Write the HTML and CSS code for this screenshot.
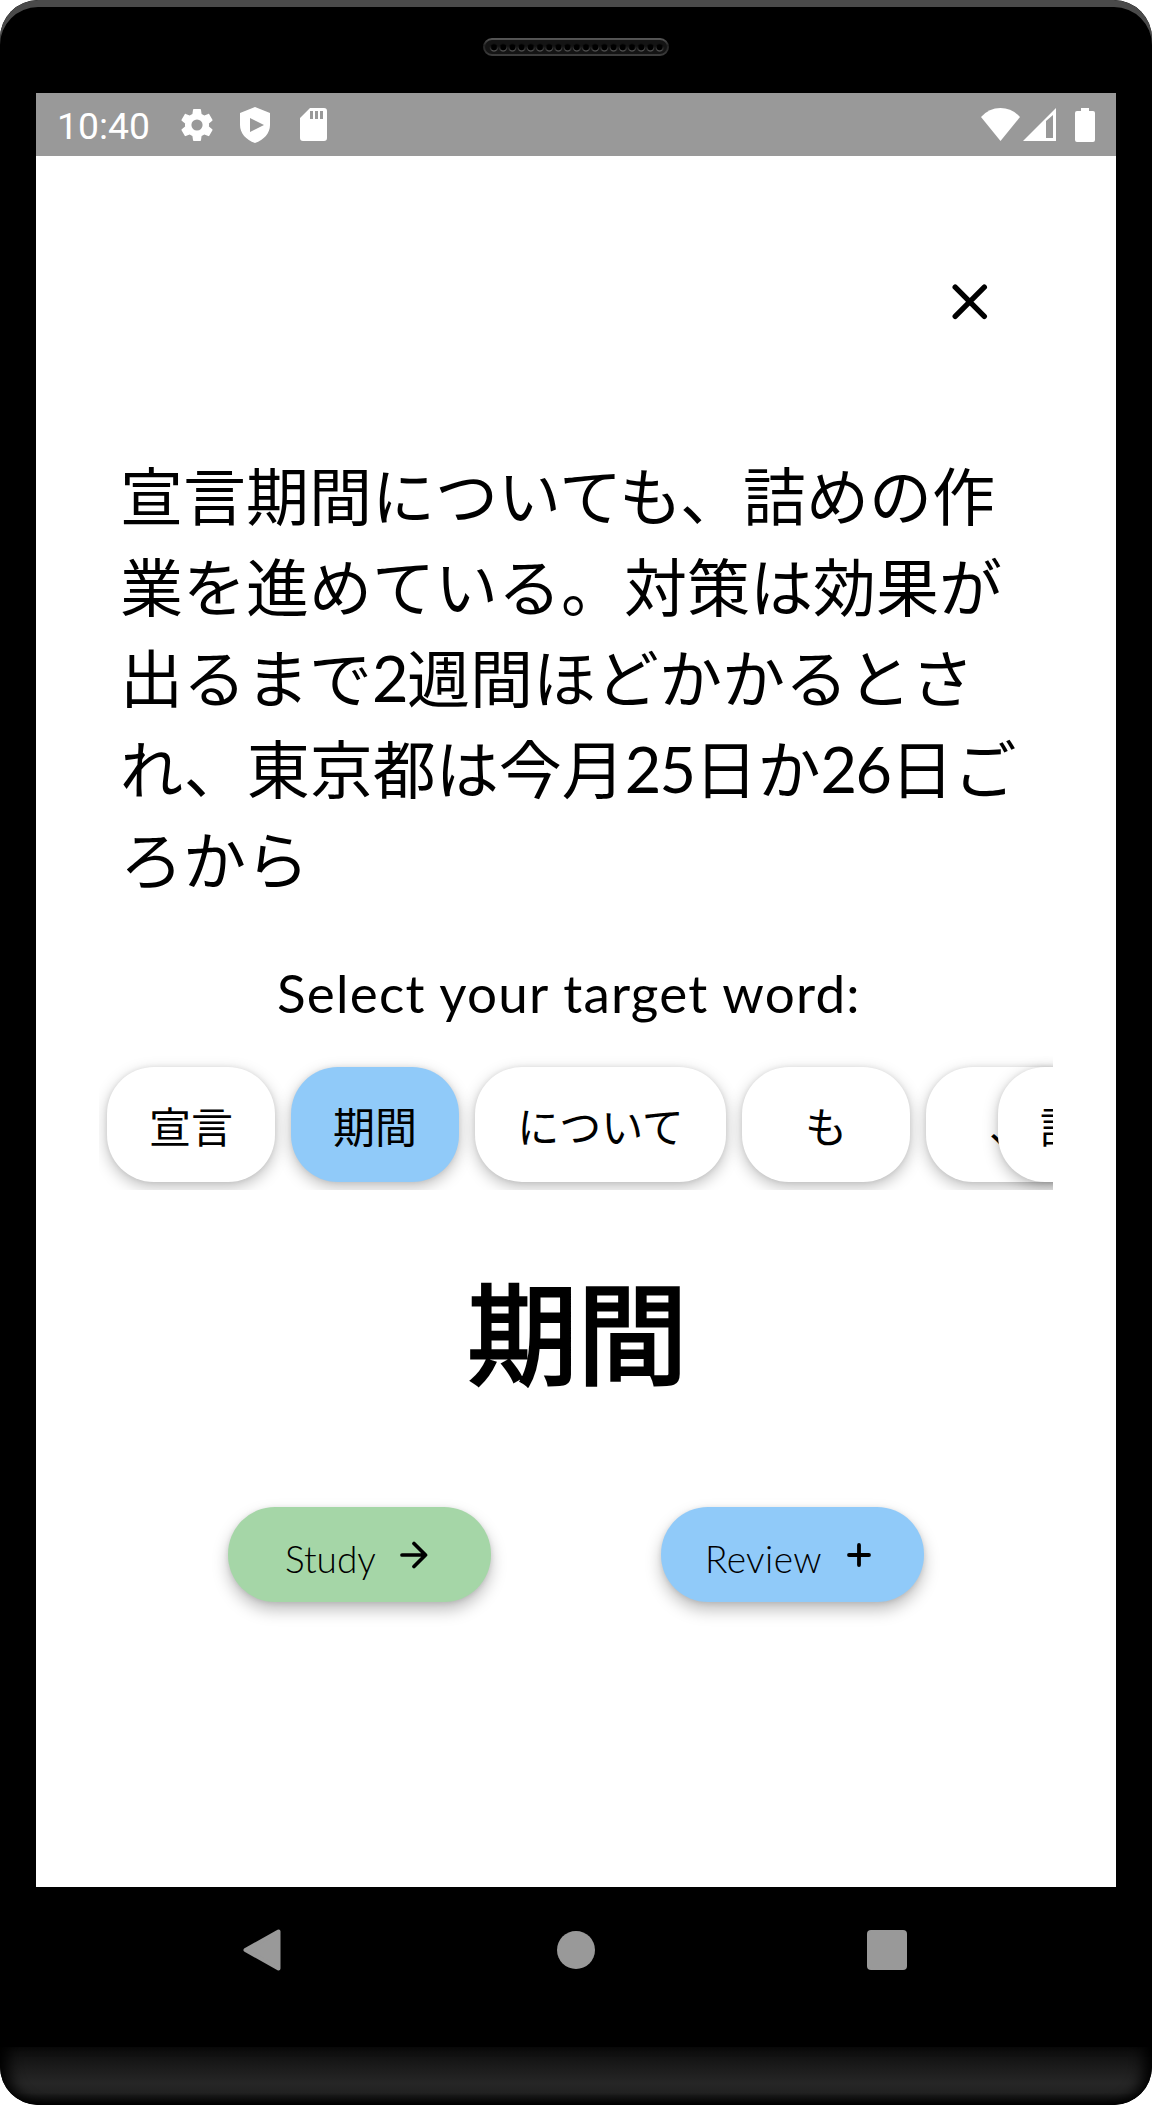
FILE: index.html
```html
<!DOCTYPE html>
<html lang="ja">
<head>
<meta charset="utf-8">
<title>Select target word</title>
<link rel="stylesheet" href="styles.css">
</head>
<body>
<div class="phone">
  <div class="top-bezel">
    <svg class="speaker" viewBox="0 0 186 18">
      <defs>
        <linearGradient id="rim" x1="0" y1="0" x2="0" y2="1"><stop offset="0" stop-color="#555"/><stop offset=".4" stop-color="#222"/><stop offset="1" stop-color="#3c3c3c"/></linearGradient>
        <linearGradient id="hole" x1="0" y1="0" x2="0" y2="1"><stop offset=".3" stop-color="#111"/><stop offset="1" stop-color="#666"/></linearGradient>
        <pattern id="holes" x="6.4" y="0" width="9.2" height="18" patternUnits="userSpaceOnUse"><circle cx="4.6" cy="9.3" r="3.6" fill="#000" stroke="url(#hole)" stroke-width="1"/></pattern>
      </defs>
      <rect x="1" y="1" width="184" height="16" rx="8" fill="#141414" stroke="url(#rim)" stroke-width="2"/>
      <rect x="6.4" y="0" width="174.8" height="18" fill="url(#holes)"/>
    </svg>
  </div>
  <main class="screen">
    <header class="status">
      <span class="time">10:40</span>
      <svg class="i-gear" viewBox="2 2 20 20"><path fill="#fff" d="M19.43 12.98c.04-.32.07-.64.07-.98s-.03-.66-.07-.98l2.11-1.65c.19-.15.24-.42.12-.64l-2-3.46c-.12-.22-.39-.3-.61-.22l-2.49 1c-.52-.4-1.08-.73-1.69-.98l-.38-2.65C14.46 2.18 14.25 2 14 2h-4c-.25 0-.46.18-.49.42l-.38 2.65c-.61.25-1.17.59-1.69.98l-2.49-1c-.23-.09-.49 0-.61.22l-2 3.46c-.13.22-.07.49.12.64l2.11 1.65c-.04.32-.07.65-.07.98s.03.66.07.98l-2.11 1.65c-.19.15-.24.42-.12.64l2 3.46c.12.22.39.3.61.22l2.49-1c.52.4 1.08.73 1.69.98l.38 2.65c.03.24.24.42.49.42h4c.25 0 .46-.18.49-.42l.38-2.65c.61-.25 1.17-.59 1.69-.98l2.49 1c.23.09.49 0 .61-.22l2-3.46c.12-.22.07-.49-.12-.64l-2.11-1.65zM12 15.5a3.5 3.5 0 1 1 0-7 3.5 3.5 0 0 1 0 7z"/></svg>
      <svg class="i-shield" viewBox="0 0 30 36"><path fill="#fff" fill-rule="evenodd" d="M15 0 30 6v12c0 8-6 15-15 18C6 33 0 26 0 18V6zM10 11v14l14-7z"/></svg>
      <svg class="i-sd" viewBox="0 0 27 33"><path fill="#fff" fill-rule="evenodd" d="M10 0h14q3 0 3 3v27q0 3-3 3H3q-3 0-3-3V10zM10 3v8h3V3zM15 3v8h3V3zM20 3v8h3V3z"/></svg>
      <span class="spacer"></span>
      <svg class="i-wifi" viewBox="0 0 39 33"><path fill="#fff" d="M0 9Q8 0 19.500 0T39 9L19.500 33z"/></svg>
      <svg class="i-signal" viewBox="0 0 33 33"><path fill="#fff" fill-rule="evenodd" d="M33 0v33H0zM23 13v17h7V7z"/></svg>
      <svg class="i-battery" viewBox="0 0 20 34"><path fill="#fff" d="M6 0h8v3h4q2 0 2 2v27q0 2-2 2H2q-2 0-2-2V5q0-2 2-2h4z"/></svg>
    </header>
    <div class="close-row">
      <svg class="close" viewBox="0 0 36 36"><path d="M3.200 3.200 32.300 32.300M32.300 3.200 3.200 32.300" fill="none" stroke="#000" stroke-width="5.400" stroke-linecap="round"/></svg>
    </div>
    <p class="sentence">宣言期間についても、詰めの作<br>業を進めている。対策は効果が<br>出るまで<span class="num">2</span>週間ほどかかるとさ<br>れ、東京都は今月<span class="num">25</span>日か<span class="num">26</span>日ご<br>ろから</p>
    <h2 class="prompt">Select your target word:</h2>
    <div class="chips">
      <button class="chip">宣言</button>
      <button class="chip selected">期間</button>
      <button class="chip wide">について</button>
      <button class="chip">も</button>
      <button class="chip">、</button>
      <button class="chip overlap">詰め</button>
    </div>
    <div class="target">期間</div>
    <div class="actions">
      <button class="action study"><span class="study-label">Study</span><svg class="arrow" viewBox="0 0 28 28"><path d="M2 14H25M14 2.500 25.500 14 14 25.500" fill="none" stroke="#000" stroke-width="3.700" stroke-linecap="round" stroke-linejoin="round"/></svg></button>
      <button class="action review"><span class="review-label">Review</span><svg class="plus" viewBox="0 0 24 24"><path d="M2 12H22M12 2V22" fill="none" stroke="#000" stroke-width="3.800" stroke-linecap="round"/></svg></button>
    </div>
  </main>
  <nav class="nav">
    <svg class="back" viewBox="0 0 38 42"><path d="M35.500 2.500V39.500L2.500 21z" fill="#999" stroke="#999" stroke-width="4" stroke-linejoin="round"/></svg>
    <span class="home"></span>
    <span class="recent"></span>
  </nav>
  <div class="chin"></div>
</div>
</body>
</html>
```
FILE: styles.css
```css
* { box-sizing: border-box; }
body { margin: 0; background: #fff; }
svg { display: block; flex: none; }
button { border: 0; padding: 0; color: #000; }

.phone {
  width: 1152px;
  height: 2105px;
  background: #000;
  border-radius: 38px;
  overflow: hidden;
  display: flex;
  flex-direction: column;
  font-family: Lato, "Noto Sans CJK JP", sans-serif;
  color: #000;
}
.top-bezel {
  height: 93px;
  flex: none;
  padding-top: 38px;
  border-radius: 38px 38px 0 0;
  box-shadow: inset 0 7px 0 #4a4a4a;
  display: flex;
  justify-content: center;
}
.speaker { width: 186px; height: 18px; }

.screen {
  height: 1794px;
  flex: none;
  margin: 0 36px;
  background: #fff;
}
.status {
  height: 63px;
  background: #999;
  display: flex;
  align-items: center;
  padding: 0 21px 0 21px;
}
.time { width: 124px; padding-top: 3px; font: 37.300px/60px Roboto, sans-serif; color: #fff; }
.i-gear { width: 32px; height: 34px; }
.i-shield { width: 30px; height: 36px; margin-left: 27px; }
.i-sd { width: 27px; height: 33px; margin-left: 30px; }
.spacer { flex: 1; }
.i-wifi { width: 39px; height: 33px; }
.i-signal { width: 33px; height: 33px; margin: 0 19px 0 3px; }
.i-battery { width: 20px; height: 34px; }

.close-row {
  display: flex;
  justify-content: flex-end;
  padding: 128px 128px 0 0;
}
.close { width: 36px; height: 36px; }

.sentence {
  margin: 130px 0 0 84px;
  font-size: 63px;
  line-height: 91px;
  white-space: nowrap;
}
.num { letter-spacing: -1.600px; }

.prompt {
  margin: 55px 0 0 241px;
  font-size: 53px;
  line-height: 66px;
  font-weight: 400;
  letter-spacing: 1.220px;
  white-space: nowrap;
}
.chips {
  display: flex;
  gap: 16px;
  width: 954px;
  height: 139px;
  margin: 25px 0 0 63px;
  padding: 16px 0 8px 8px;
  overflow: hidden;
}
.chip {
  width: 168px;
  height: 115px;
  flex: none;
  padding-top: 4px;
  border-radius: 47px;
  background: #fff;
  font: 42px/60px Lato, "Noto Sans CJK JP", sans-serif;
  box-shadow: 0 5px 15px rgba(0, 0, 0, .25), 0 0 5px rgba(0, 0, 0, .08);
}
.selected { background: #90caf9; }
.wide { width: 251px; }
.overlap { margin-left: -112px; }

.target {
  margin-top: 63px;
  padding-left: 3px;
  height: 160px;
  font-size: 110px;
  line-height: 160px;
  text-align: center;
  -webkit-text-stroke: 3px #000;
}
.actions {
  display: flex;
  gap: 170px;
  margin: 94px 0 0 192px;
}
.action {
  width: 263px;
  height: 95px;
  border-radius: 47px;
  display: flex;
  align-items: center;
  font: 300 37px/48px Lato, sans-serif;
  box-shadow: 0 8px 16px rgba(0, 0, 0, .25), 0 1px 5px rgba(0, 0, 0, .1);
}
.action span { padding-top: 8px; text-align: left; }
.study { background: #a5d6a7; padding-left: 57px; }
.review { background: #90caf9; padding-left: 44px; }
.study-label { width: 115px; }
.review-label { width: 142px; letter-spacing: .4px; }
.arrow { width: 28px; height: 28px; }
.plus { width: 24px; height: 24px; }

.nav {
  height: 160px;
  flex: none;
  display: flex;
  align-items: center;
  justify-content: space-between;
  padding: 0 245px 34px 243px;
}
.back { width: 38px; height: 42px; }
.home { width: 38px; height: 38px; border-radius: 50%; background: #999; margin-left: 3px; }
.recent { width: 40px; height: 40px; border-radius: 4px; background: #999; }
.chin {
  height: 58px;
  border-radius: 0 0 38px 38px;
  background: linear-gradient(#0c0c0c, #1b1b1b 35%, #262626 62%, #222 78%, #000);
  box-shadow: inset 14px 0 14px -6px #000, inset -14px 0 14px -6px #000;
}
```
